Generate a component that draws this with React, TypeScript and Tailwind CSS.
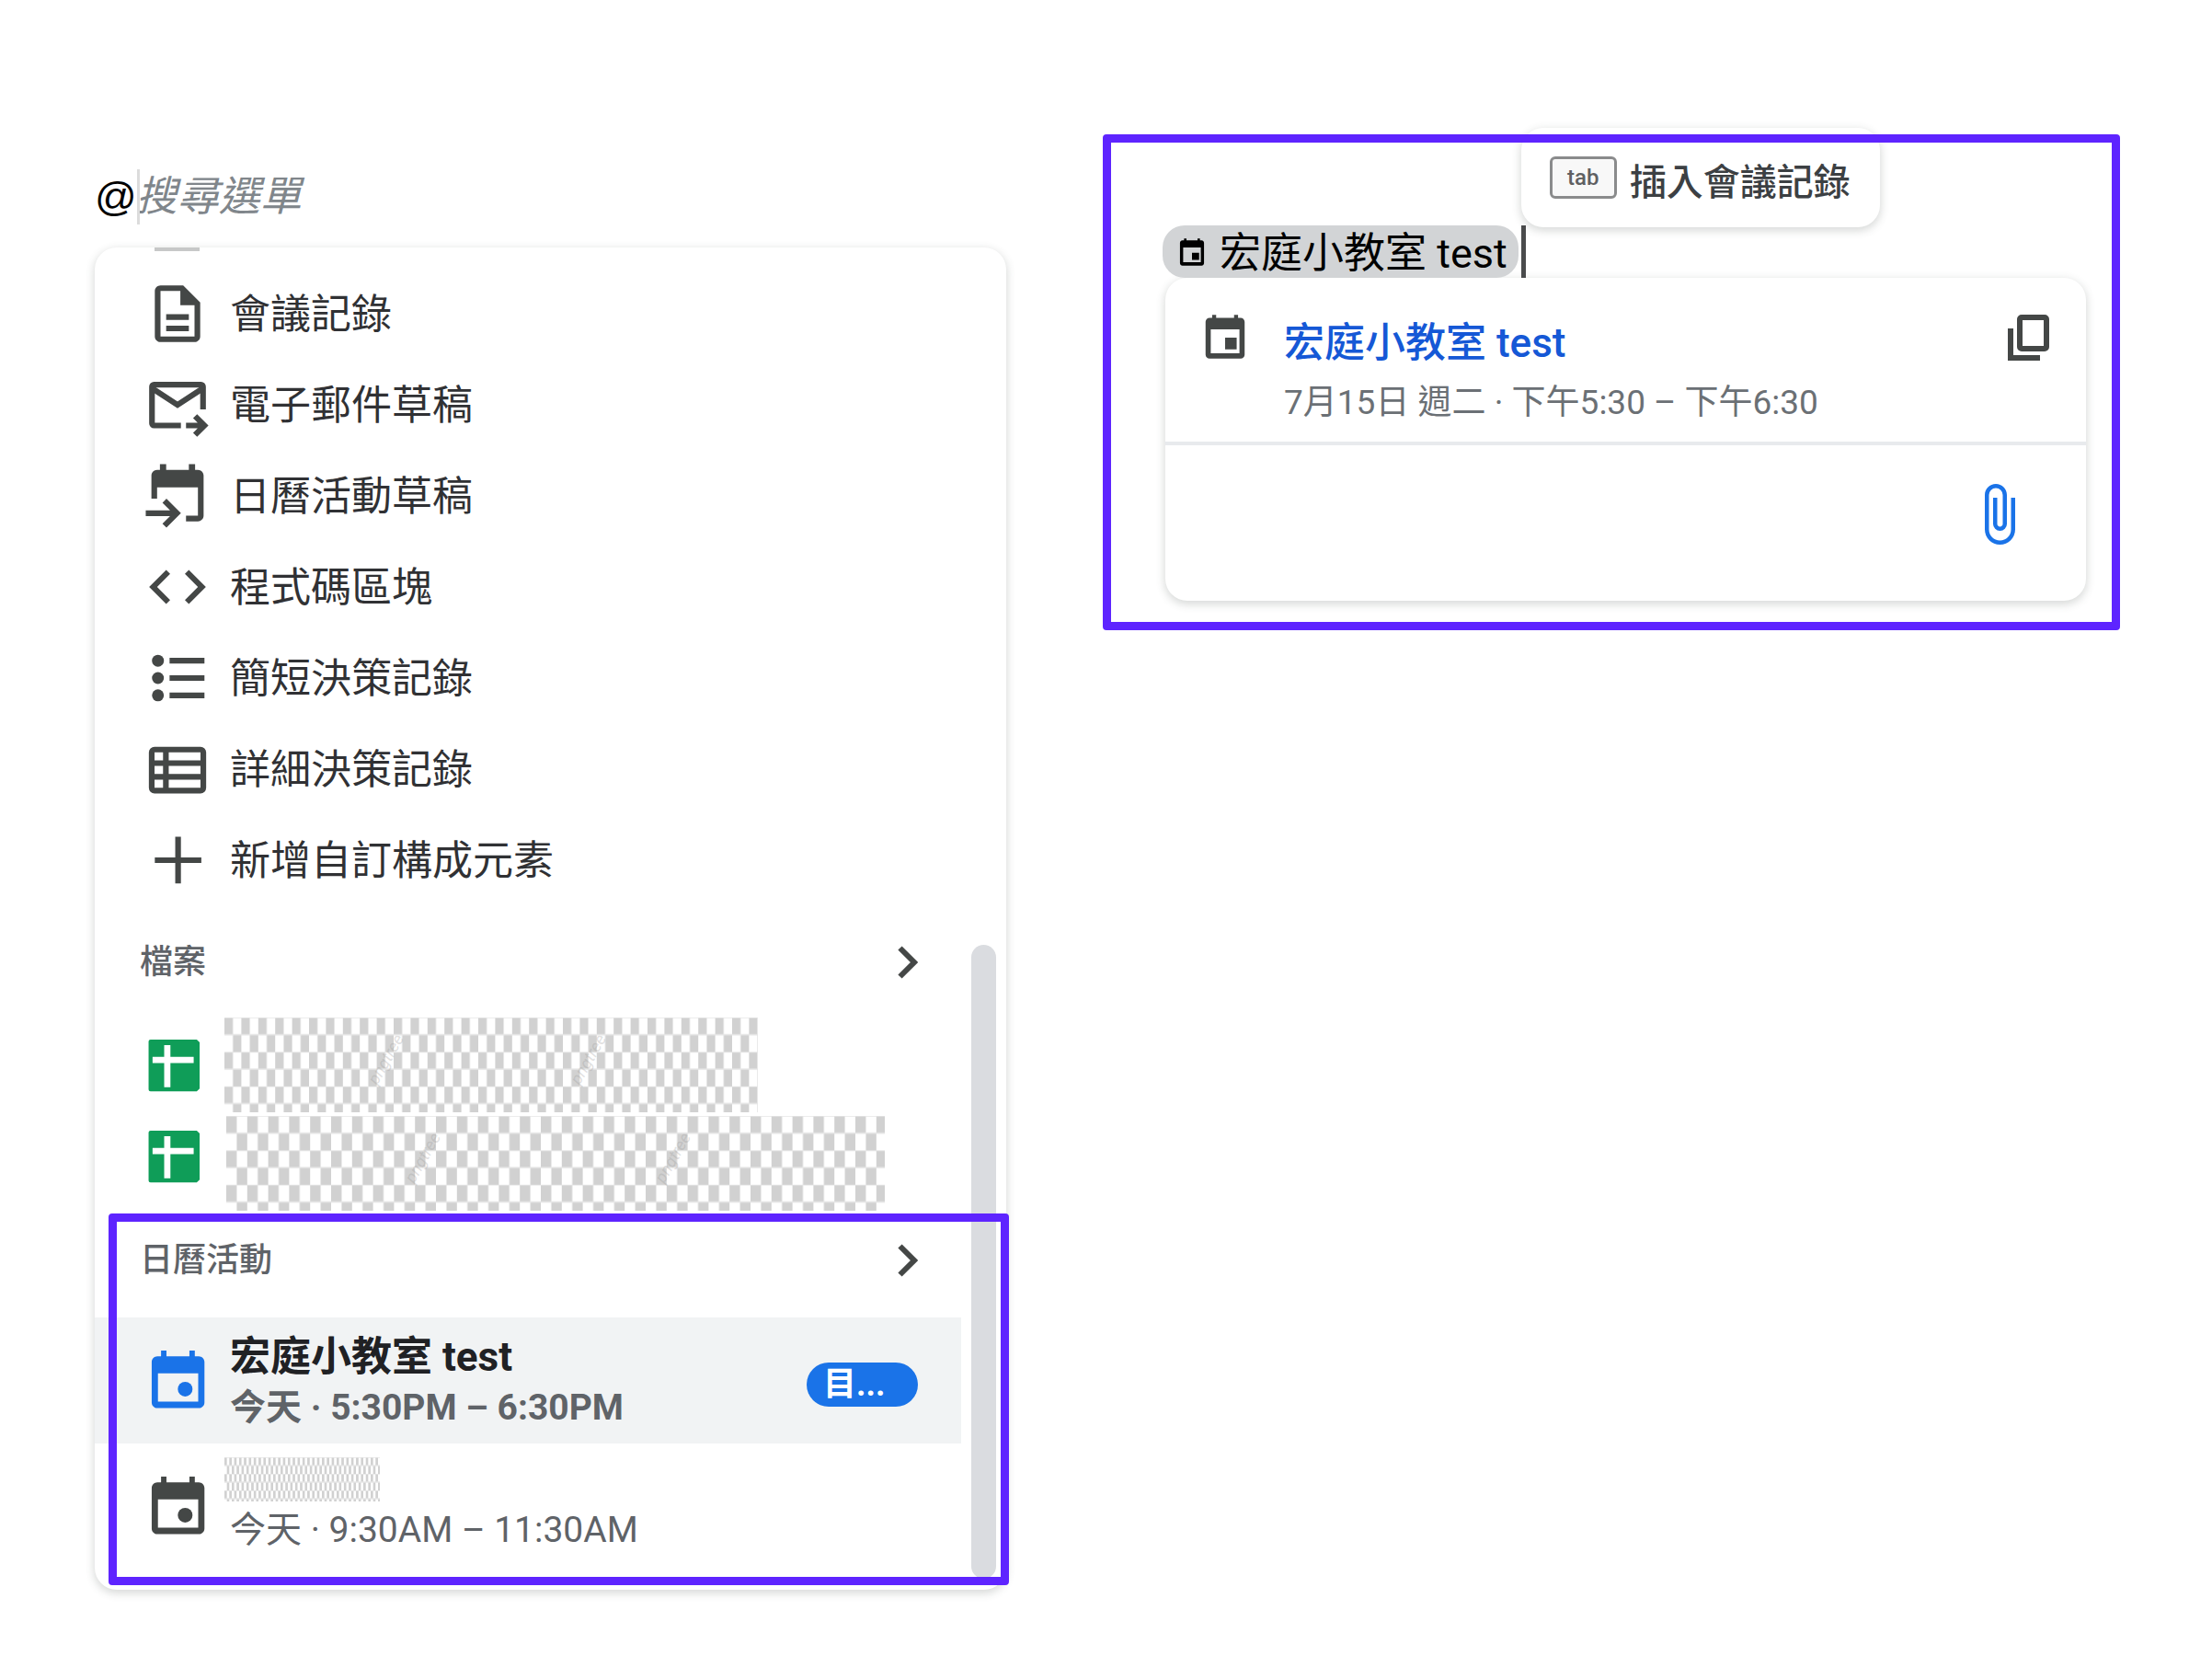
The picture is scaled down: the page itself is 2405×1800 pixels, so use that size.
import { useId } from 'react';
import type { ReactNode } from 'react';

function Icon({ children, className = 'size-[74px]' }: { children: ReactNode; className?: string }) {
  return (
    <svg viewBox="0 0 24 24" fill="none" aria-hidden="true" className={`shrink-0 ${className}`}>
      {children}
    </svg>
  );
}

function DocIcon() {
  return (
    <Icon>
      <path
        fill="currentColor"
        d="M14 2H6c-1.1 0-2 .9-2 2v16c0 1.1.9 2 2 2h12c1.1 0 2-.9 2-2V8l-6-6zM6 20V4h7v5h5v11H6zM8 16.2h8v2H8zM8 12.2h8v2H8z"
      />
    </Icon>
  );
}

function MailIcon() {
  return (
    <Icon>
      <g stroke="currentColor" strokeWidth="2">
        <path d="M21 13.6V5.6a.7.7 0 0 0-.7-.7H3.7a.7.7 0 0 0-.7.7v13a.7.7 0 0 0 .7.7H13.2" />
        <path d="M3.2 6.3 12 12l8.8-5.7" />
        <path d="M15 19.3h6.3M18.2 16l3.3 3.3-3.3 3.3" />
      </g>
    </Icon>
  );
}

function CalendarDraftIcon() {
  return (
    <Icon>
      <path
        fill="currentColor"
        d="M5.8.8h2.2v2h8V.8h2.2v2h1c1.1 0 2 .9 2 2v14.2c0 1.100-.9 2-2 2h-4.200v-2h4.200V9H4.800v4h-2V4.800c0-1.100.9-2 2-2h1z"
      />
      <path stroke="currentColor" strokeWidth="2" d="M.8 18.1h10.8M7.4 13.7l4.4 4.4-4.4 4.4" />
    </Icon>
  );
}

function CodeIcon() {
  return (
    <Icon>
      <path
        fill="currentColor"
        d="M9.4 16.6 4.8 12l4.6-4.6L8 6l-6 6 6 6 1.4-1.4zm5.2 0 4.6-4.6-4.6-4.6L16 6l6 6-6 6-1.4-1.4z"
      />
    </Icon>
  );
}

function ListIcon() {
  return (
    <Icon>
      <g fill="currentColor">
        <circle cx="5.1" cy="5.9" r="2.1" />
        <circle cx="5.1" cy="12" r="2.1" />
        <circle cx="5.1" cy="18.1" r="2.1" />
        <path d="M9.2 4.9h12.3v2H9.2zM9.2 11h12.3v2H9.2zM9.2 17.1h12.3v2H9.2z" />
      </g>
    </Icon>
  );
}

function TableIcon() {
  return (
    <Icon>
      <g stroke="currentColor" strokeWidth="2">
        <rect x="2.9" y="5.1" width="18.2" height="14.5" rx="1" />
        <path d="M7.9 5v14.5M3 9.9h18M3 14.7h18" />
      </g>
    </Icon>
  );
}

function PlusIcon() {
  return (
    <Icon>
      <path stroke="currentColor" strokeWidth="2" d="M4 12h16.4M12.2 3.7v16.5" />
    </Icon>
  );
}

function SheetsIcon() {
  return (
    <Icon>
      <path fill="#0f9d58" d="M2.5 2.9h16.3l1 1v16.3l-1 1H2.5a.7.7 0 0 1-.7-.7V3.6a.7.7 0 0 1 .7-.7z" />
      <path stroke="#fff" strokeWidth="2.2" d="M8.4 4.9v14.800M3.200 10.100h14.500" />
    </Icon>
  );
}

function EventIcon() {
  return (
    <Icon>
      <path
        fill="currentColor"
        fillRule="evenodd"
        d="M6.2 1.3h1.900v2h8.100v-2h1.900v2h1.400c1.100 0 2 .9 2 2v14.300c0 1.100-.9 2-2 2H4.900c-1.100 0-2-.9-2-2V5.300c0-1.100.9-2 2-2h1.300zM5.100 9.300v10h14.200v-10z"
      />
      <circle cx="14.7" cy="14.9" r="2.6" fill="currentColor" />
    </Icon>
  );
}

function TodayIcon({ className }: { className: string }) {
  return (
    <Icon className={className}>
      <path
        fill="currentColor"
        fillRule="evenodd"
        d="M5.500 1h2v1.500h9V1h2v1.500h1.300c1.100 0 2 .9 2 2v16.500c0 1.100-.9 2-2 2H4.200c-1.100 0-2-.9-2-2V4.500c0-1.100.9-2 2-2h1.300zM4.800 8.300v12h14.400v-12zM12 12.500h5.800v5.800H12z"
      />
    </Icon>
  );
}

function CopyIcon() {
  return (
    <svg viewBox="0 0 45 50" fill="none" stroke="currentColor" strokeWidth="6" aria-hidden="true" className="h-[50px] w-[45px]">
      <rect x="13" y="3" width="29" height="34" rx="2" />
      <path d="M3 15v32h32" />
    </svg>
  );
}

function ChevronIcon() {
  return (
    <svg viewBox="0 0 22 36" fill="none" stroke="#444746" strokeWidth="6" aria-hidden="true" className="h-9 w-[22px]">
      <path d="M2.5 2.5 18 18 2.5 33.5" />
    </svg>
  );
}

// Checkered mask laid over private names
function Mask({
  cellWidth,
  cellHeight,
  marks = [],
  className,
}: {
  cellWidth: number;
  cellHeight: number;
  marks?: number[];
  className: string;
}) {
  const id = useId();
  return (
    <svg aria-hidden="true" className={`shrink-0 ${className}`}>
      <defs>
        <pattern id={id} width={cellWidth * 2} height={cellHeight * 2} patternUnits="userSpaceOnUse">
          <rect width={cellWidth} height={cellHeight} fill="#d1d1d1" />
          <rect x={cellWidth} y={cellHeight} width={cellWidth} height={cellHeight} fill="#d1d1d1" />
          <path d={`M0 0H${cellWidth * 2}M0 ${cellHeight}H${cellWidth * 2}`} stroke="#e6e6e6" strokeWidth="1.5" />
        </pattern>
      </defs>
      <rect width="100%" height="100%" fill={`url(#${id})`} />
      {marks.map((x) => (
        <text
          key={x}
          transform={`translate(${x} 74) rotate(-60)`}
          fill="#9a9a9a"
          fillOpacity="0.3"
          fontSize="18"
          fontStyle="italic"
        >
          pngtree
        </text>
      ))}
    </svg>
  );
}

const blocks = [
  { label: '會議記錄', icon: <DocIcon /> },
  { label: '電子郵件草稿', icon: <MailIcon /> },
  { label: '日曆活動草稿', icon: <CalendarDraftIcon /> },
  { label: '程式碼區塊', icon: <CodeIcon /> },
  { label: '簡短決策記錄', icon: <ListIcon /> },
  { label: '詳細決策記錄', icon: <TableIcon /> },
  { label: '新增自訂構成元素', icon: <PlusIcon /> },
];

function SectionHeader({ label }: { label: string }) {
  return (
    <button type="button" className="flex h-[124px] w-full items-center justify-between pr-[47px] pl-[49px] text-left">
      <span className="text-[36px] leading-[50px] font-medium text-[#5f6368]">{label}</span>
      <ChevronIcon />
    </button>
  );
}

function MentionMenu() {
  return (
    <div className="relative flex rounded-3xl bg-white shadow-[0_3px_10px_1px_rgba(60,70,67,0.2)]">
      <div className="min-w-0 flex-1">
        {/* Bottom edge of the item scrolled out above */}
        <div className="h-[22px] pl-[65px]">
          <div className="h-1 w-[49px] bg-[#c7c8c8]"></div>
        </div>

        {blocks.map((block) => (
          <button
            key={block.label}
            type="button"
            className="flex h-[99px] w-full items-center gap-5 pl-[53px] text-left text-[44px] leading-[60px] text-[#303134]"
          >
            <span className="text-[#444746]">{block.icon}</span>
            <span className="pt-0.5">{block.label}</span>
          </button>
        ))}

        <SectionHeader label="檔案" />
        <button type="button" aria-label="試算表 1" className="flex h-[99px] w-full items-center gap-[14px] pl-[53px]">
          <SheetsIcon />
          <Mask cellWidth={9.2} cellHeight={18.7} marks={[166, 386]} className="h-[103px] w-[580px]" />
        </button>
        <button type="button" aria-label="試算表 2" className="mb-0.5 flex h-[99px] w-full items-center gap-4 pl-[53px]">
          <SheetsIcon />
          <Mask cellWidth={11.4} cellHeight={18.7} marks={[204, 476]} className="mt-4 h-[103px] w-[716px]" />
        </button>

        <SectionHeader label="日曆活動" />
        <button
          type="button"
          className="flex h-[137px] w-full items-center gap-5 bg-[#f1f3f4] pr-[47px] pl-[53px] text-left"
        >
          <span className="text-[#1a73e8]">
            <EventIcon />
          </span>
          <span className="flex-1 pt-1 font-bold">
            <span className="block text-[44px] leading-[55px] text-[#202124]">宏庭小教室 test</span>
            <span className="block text-[39px] leading-[55px] text-[#5f6368]">今天 · 5:30PM – 6:30PM</span>
          </span>
          <span className="mt-2 flex h-12 w-[121px] items-center rounded-full bg-[#1a73e8] pl-[18px] text-[36px] leading-[48px] font-bold text-white">
            目...
          </span>
        </button>
        <button type="button" className="flex h-[137px] w-full items-center gap-[14px] pl-[53px] text-left">
          <span className="text-[#444746]">
            <EventIcon />
          </span>
          <span>
            <Mask cellWidth={2.65} cellHeight={9} className="block h-12 w-[169px]" />
            <span className="mt-1 block pl-1.5 text-[39px] leading-[55px] text-[#5f6368]">今天 · 9:30AM – 11:30AM</span>
          </span>
        </button>
        <div className="h-[22px]"></div>
      </div>

      {/* Scrollbar */}
      <div className="flex w-[49px] flex-col justify-end pr-[11px] pb-3 pl-[11px]">
        <div className="h-[689px] rounded-full bg-[#dadce0]"></div>
      </div>

      <div className="pointer-events-none absolute -right-[3px] bottom-[5px] left-[15px] h-[404px] rounded border-[9px] border-[#5e24ff]"></div>
    </div>
  );
}

function EventCard() {
  return (
    <div className="rounded-3xl bg-white shadow-[0_3px_10px_1px_rgba(60,70,67,0.2)]">
      <div className="flex h-[182px] items-start border-b-4 border-[#e8eaed] pr-10 pl-[39px]">
        <span className="mt-[38px] text-[#444746]">
          <TodayIcon className="size-[52px]" />
        </span>
        <div className="mt-[43px] ml-[38px] flex-1">
          <a href="#event" className="block text-[44px] leading-[56px] font-medium text-[#1558d6]">
            宏庭小教室 test
          </a>
          <p className="mt-[9px] text-[37px] leading-[56px] text-[#6b7075]">7月15日 週二 · 下午5:30 – 下午6:30</p>
        </div>
        <button type="button" aria-label="複製" className="mt-10 text-[#444746]">
          <CopyIcon />
        </button>
      </div>
      <div className="flex h-[169px] items-start justify-end pt-[39px] pr-[59px]">
        <button type="button" aria-label="附加檔案" className="text-[#1a73e8]">
          <Icon className="size-[72px]">
            <path
              fill="currentColor"
              d="M16.5 6v11.5c0 2.210-1.790 4-4 4s-4-1.790-4-4V5a2.500 2.500 0 0 1 5 0v10.500c0 .55-.45 1-1 1s-1-.45-1-1V6H10v9.500a2.500 2.500 0 0 0 5 0V5c0-2.210-1.790-4-4-4S7 2.790 7 5v12.500c0 3.040 2.460 5.500 5.500 5.500s5.500-2.460 5.500-5.500V6h-1.500z"
            />
          </Icon>
        </button>
      </div>
    </div>
  );
}

function EventPreview() {
  return (
    <div className="relative pt-[99px] pr-[37px] pb-8 pl-[68px]">
      <div className="-ml-[3px] flex">
        <span className="flex h-[57px] items-center gap-[14px] rounded-3xl bg-[#d2d4d6] pr-3 pl-4 text-[45px] leading-[57px] text-black">
          <TodayIcon className="size-8" />
          <span className="pt-1">宏庭小教室 test</span>
        </span>
        <div className="relative ml-[3px] w-[5px] bg-[#4a4b4c]">
          <div
            role="tooltip"
            className="absolute bottom-full left-0 -mb-0.5 flex h-[108px] items-center gap-[14px] rounded-3xl bg-white pr-8 pl-[31px] whitespace-nowrap shadow-[0_3px_10px_1px_rgba(60,70,67,0.2)]"
          >
            <kbd className="flex h-[46px] w-[73px] items-center justify-center rounded-md border-[3px] border-[#8a8b8c] bg-[#f8f8f8] font-['Roboto',sans-serif] text-[24px] leading-[40px] font-medium text-[#5f6062]">
              tab
            </kbd>
            <span className="pt-3 text-[40px] leading-[56px] font-medium text-[#3c4043]">插入會議記錄</span>
          </div>
        </div>
      </div>
      <EventCard />
      <div className="pointer-events-none absolute inset-0 rounded border-[9px] border-[#5e24ff]"></div>
    </div>
  );
}

export default function App() {
  return (
    <main className="grid min-h-screen grid-cols-[991fr_1106fr] items-start gap-x-[105px] bg-white pr-[100px] pl-[103px] font-['Roboto','Noto_Sans_CJK_TC',sans-serif]">
      <div className="pt-[184px]">
        <label className="mb-[25px] flex h-[60px] items-center text-[45px] leading-[60px]">
          <span className="font-['Liberation_Sans',sans-serif] text-black">@</span>
          <input
            type="text"
            aria-label="搜尋選單"
            placeholder="搜尋選單"
            className="h-[60px] min-w-0 flex-1 border-l-[3px] border-[#dcdcdc] -indent-1 italic outline-none placeholder:text-[#80868b]"
          />
        </label>
        <MentionMenu />
      </div>
      <div className="pt-[146px]">
        <EventPreview />
      </div>
    </main>
  );
}
